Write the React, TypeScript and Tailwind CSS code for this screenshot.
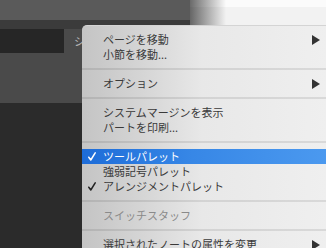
import React from "react";

type Item =
  | { kind: "sep" }
  | { kind: "row"; label: string; arrow?: boolean; check?: boolean; active?: boolean; disabled?: boolean };

const items: Item[] = [
  { kind: "row", label: "ページを移動", arrow: true },
  { kind: "row", label: "小節を移動..." },
  { kind: "sep" },
  { kind: "row", label: "オプション", arrow: true },
  { kind: "sep" },
  { kind: "row", label: "システムマージンを表示" },
  { kind: "row", label: "パートを印刷..." },
  { kind: "sep" },
  { kind: "row", label: "ツールパレット", check: true, active: true },
  { kind: "row", label: "強弱記号パレット" },
  { kind: "row", label: "アレンジメントパレット", check: true },
  { kind: "sep" },
  { kind: "row", label: "スイッチスタッフ", disabled: true },
  { kind: "sep" },
  { kind: "row", label: "選択されたノートの属性を変更", arrow: true },
];

function Arrow() {
  return (
    <svg width="8" height="10" viewBox="0 0 8 10" className="shrink-0">
      <polygon points="0,0 8,5 0,10" fill="#333333" />
    </svg>
  );
}

function Check({ color }: { color: string }) {
  return (
    <svg width="8" height="9" viewBox="0 0 8 9">
      <path d="M0.8 5.2 L2.8 8 L7.2 0.8" fill="none" stroke={color} strokeWidth="1.5" strokeLinecap="round" strokeLinejoin="round" />
    </svg>
  );
}

export default function App() {
  return (
    <div className="relative w-[326px] h-[248px] overflow-hidden font-['Noto_Sans_CJK_JP','Liberation_Sans',sans-serif]">
      {/* background windows */}
      <div className="flex h-full">
        <div className="w-[190px] flex flex-col bg-[#2b2b2b]">
          <div className="h-[20px] bg-[#5a5a5a]" />
          <div className="h-[9px] bg-[#3b3b3b]" />
          <div className="h-[24px] flex bg-[#4a4a4a]">
            <div className="w-[64px] bg-[#262626]" />
            <span className="ml-[10px] text-[11px] leading-[24px] text-[#b4b4b4]">シ</span>
          </div>
          <div className="h-[50px] bg-[#4a4a4a]" />
        </div>
        <div className="flex-1 flex flex-col bg-white">
          <div className="h-[7px] bg-[linear-gradient(to_right,#6a6a6a,#fbfbfb_36px)]" />
          <div className="h-[18px] bg-[linear-gradient(to_right,#666666,#f2f2f2_36px)]" />
        </div>
      </div>

      {/* context menu */}
      <div className="absolute left-[82px] top-[25px] w-[244px] h-[240px] rounded-tl-[5px] border-t border-[#d4d4d4] bg-[linear-gradient(to_right,#c4c4c4,#d8d8d8_70px,#e8e8e8_120px,#efefef)] pt-[6px] text-[11px] text-[#3a3a3a]">
        {items.map((it, i) =>
          it.kind === "sep" ? (
            <div key={i} className="h-[14px] flex items-center">
              <div className="h-[2px] w-full bg-black/[0.09]" />
            </div>
          ) : (
            <div
              key={i}
              className={
                "h-[15px] flex items-center pr-[6px] " +
                (it.active
                  ? "bg-[linear-gradient(to_right,#1d6cd8,#3787e6_110px,#4b99ef)] text-white"
                  : it.disabled
                  ? "text-[#8a8a8a]"
                  : "")
              }
            >
              <span className="w-[21px] pl-[6px] shrink-0 flex items-center">
                {it.check ? <Check color={it.active ? "#ffffff" : "#222222"} /> : null}
              </span>
              <span className="flex-1 leading-none whitespace-nowrap">{it.label}</span>
              {it.arrow ? <Arrow /> : null}
            </div>
          )
        )}
      </div>
    </div>
  );
}
